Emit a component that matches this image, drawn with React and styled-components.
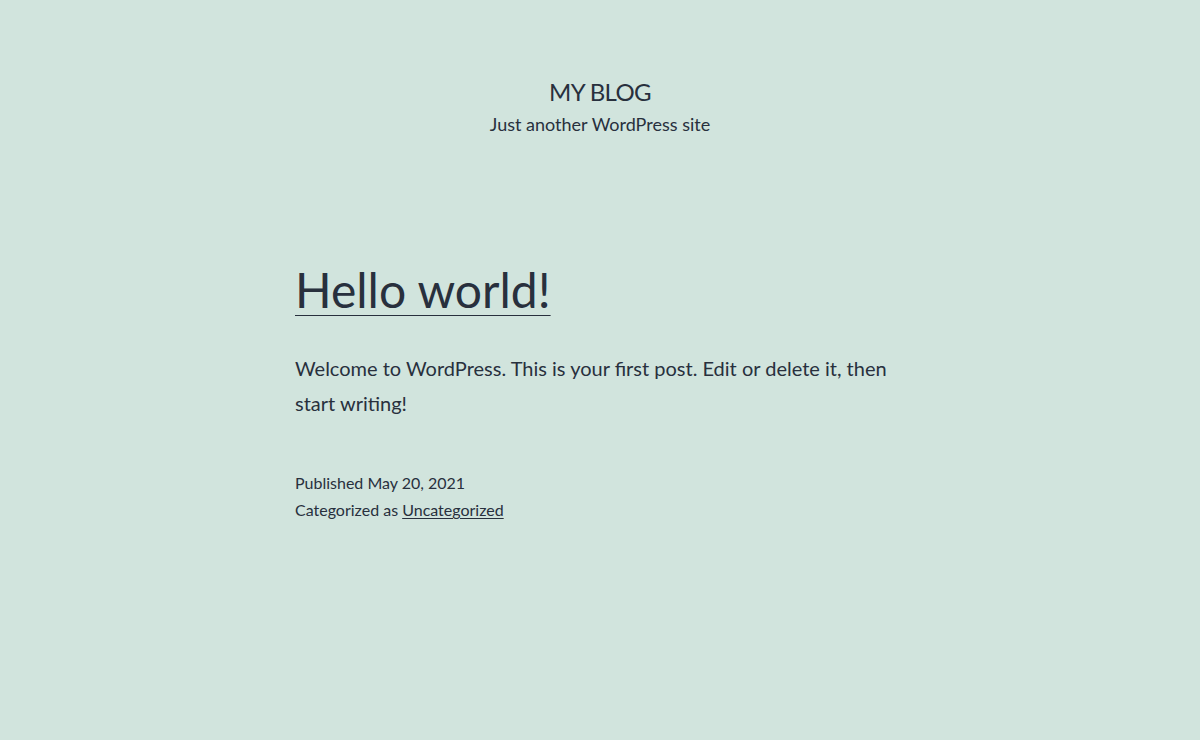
import React from 'react'
import styled, { createGlobalStyle } from 'styled-components'

const GlobalStyle = createGlobalStyle`
  html, body {
    margin: 0;
    padding: 0;
    background: #d1e4dd;
    color: #28303d;
    font-family: Lato, "Noto Sans", sans-serif;
  }
  a {
    color: #28303d;
  }
`

const Page = styled.div`
  min-height: 740px;
  padding-top: 76px;
  box-sizing: border-box;
`

const Header = styled.header`
  text-align: center;
`

const SiteTitle = styled.h1`
  margin: 0;
  font-size: 24px;
  font-weight: 400;
  line-height: 1.3;
  letter-spacing: -0.6px;
`

const Tagline = styled.p`
  margin: 5px 0 0;
  font-size: 18px;
  line-height: 1.4;
`

const Main = styled.main`
  width: 610px;
  margin: 122px auto 0;
`

const EntryTitle = styled.h2`
  margin: 0;
  font-size: 48px;
  font-weight: 400;
  line-height: 1.3;

  a {
    text-decoration: underline;
    text-decoration-thickness: 1px;
    text-underline-offset: 7px;
  }
`

const Content = styled.div`
  margin-top: 29px;
  font-size: 20px;
  line-height: 35px;

  p {
    margin: 0;
  }
`

const Meta = styled.footer`
  margin-top: 48px;
  font-size: 16px;
  line-height: 27px;

  a {
    text-decoration-thickness: 1px;
    text-underline-offset: 2px;
  }
`

export default function App() {
  return (
    <>
      <GlobalStyle />
      <Page>
        <Header>
          <SiteTitle>MY BLOG</SiteTitle>
          <Tagline>Just another WordPress site</Tagline>
        </Header>
        <Main>
          <article>
            <EntryTitle>
              <a href="#">Hello world!</a>
            </EntryTitle>
            <Content>
              <p>
                Welcome to WordPress. This is your first post. Edit or delete it, then start
                writing!
              </p>
            </Content>
            <Meta>
              <div>Published May 20, 2021</div>
              <div>
                Categorized as <a href="#">Uncategorized</a>
              </div>
            </Meta>
          </article>
        </Main>
      </Page>
    </>
  )
}
